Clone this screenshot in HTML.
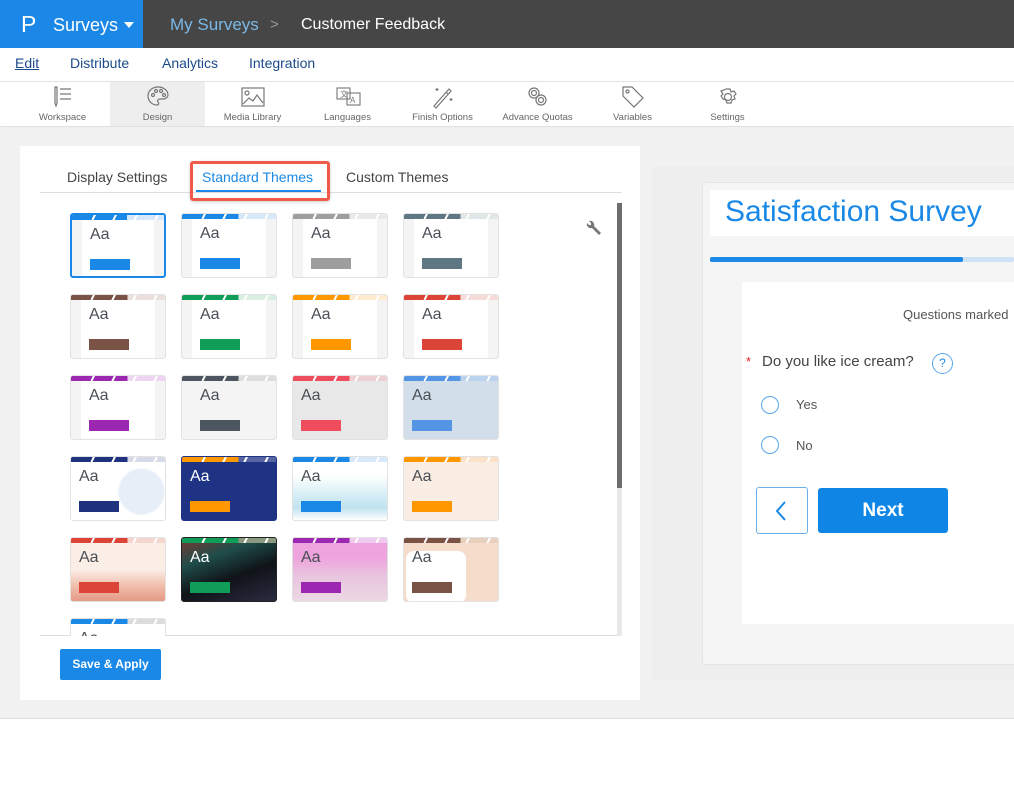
<!DOCTYPE html>
<html><head><meta charset="utf-8"><style>
*{box-sizing:border-box;margin:0;padding:0}
body{width:1014px;height:796px;overflow:hidden;background:#fff;font-family:"Liberation Sans",sans-serif;position:relative}
.abs{position:absolute}
.top{left:0;top:0;width:1014px;height:48px;background:#464646}
.brand{left:0;top:0;width:143px;height:48px;background:#1b87e6}
.nav a{position:absolute;top:55px;font-size:14px;color:#1a4a8a;text-decoration:none}
.tb{left:0;top:81px;width:1014px;height:45px;background:#fff;border-top:1px solid #e3e3e3;box-shadow:0 2px 3px rgba(0,0,0,.15)}
.ti{position:absolute;top:0;width:95px;height:44px;text-align:center}
.ti span{position:absolute;left:0;right:0;top:30px;font-size:9.5px;color:#666}
.ti svg{position:absolute;left:36px;top:3px}
.card{position:absolute;width:96px;height:65px;border:1px solid #e2e2e2;border-radius:3px;overflow:hidden;background:#f4f4f4}
.card .st{position:absolute;left:0;top:0;width:100%;height:5px}
.card .st:after{content:"";position:absolute;inset:0;background:repeating-linear-gradient(115deg,transparent 0 17px,#fff 17px 19px);background-position:3px 0}
.card .in{position:absolute;left:10px;right:10px;top:5px;bottom:0;background:#fff}
.card .aa{position:absolute;left:18px;top:11px;font-size:16px;color:#4a4f55}
.card .bt{position:absolute;left:18px;top:44px;width:40px;height:11px}
</style></head><body>
<div class="abs top"></div>
<div class="abs brand"></div>
<div class="abs" style="left:21px;top:11px;color:#fff;font-size:23px">P</div>
<div class="abs" style="left:53px;top:15px;color:#fff;font-size:18px">Surveys</div>
<div class="abs" style="left:124px;top:22px;width:0;height:0;border-left:5px solid transparent;border-right:5px solid transparent;border-top:6px solid #fff"></div>
<div class="abs" style="left:170px;top:15px;color:#7ab8e6;font-size:17px">My Surveys</div>
<div class="abs" style="left:270px;top:16px;color:#999;font-size:15px">&gt;</div>
<div class="abs" style="left:301px;top:16px;color:#fff;font-size:16px">Customer Feedback</div>
<div class="nav">
<a style="left:15px;text-decoration:underline">Edit</a><a style="left:70px">Distribute</a><a style="left:162px">Analytics</a><a style="left:249px">Integration</a>
</div>
<div class="abs tb">
<div class="ti" style="left:15px"><svg width="24" height="24" viewBox="0 0 24 24" fill="none" stroke="#777" stroke-width="1.2"><path d="M4 2v16l1 3 1-3V2z M9 4h11 M9 9h11 M9 14h11"/></svg><span>Workspace</span></div>
<div class="ti" style="left:110px;background:#eee"><svg width="24" height="24" viewBox="0 0 24 24" fill="none" stroke="#777" stroke-width="1.2"><path d="M12 2C6 2 2 6 2 11s4 9 9 9c2 0 2-2 1-3s0-3 2-3h3c3 0 5-2 5-4 0-5-5-8-10-8z"/><circle cx="7" cy="10" r="1.5"/><circle cx="10" cy="6" r="1.5"/><circle cx="15" cy="6" r="1.5"/><circle cx="18" cy="10" r="1.5"/></svg><span>Design</span></div>
<div class="ti" style="left:205px"><svg width="24" height="24" viewBox="0 0 24 24" fill="none" stroke="#777" stroke-width="1.2"><rect x="1" y="3" width="22" height="18"/><circle cx="6" cy="8" r="2"/><path d="M2 19l6-6 4 3 4-6 6 8"/></svg><span>Media Library</span></div>
<div class="ti" style="left:300px"><svg width="26" height="24" viewBox="0 0 26 24" fill="none" stroke="#777" stroke-width="1.1"><rect x="1" y="3" width="13" height="11"/><rect x="11" y="8" width="13" height="12"/><text x="4" y="12" font-size="8" fill="#777" stroke="none">文</text><text x="14" y="18" font-size="8" fill="#777" stroke="none">A</text></svg><span>Languages</span></div>
<div class="ti" style="left:395px"><svg width="24" height="24" viewBox="0 0 24 24" fill="none" stroke="#777" stroke-width="1.2"><path d="M3 21L18 4l2 2L5 23z M15 7l2 2 M6 3v3 M4.5 4.5h3 M20 13v3 M18.5 14.5h3"/></svg><span>Finish Options</span></div>
<div class="ti" style="left:490px"><svg width="24" height="24" viewBox="0 0 24 24" fill="none" stroke="#777" stroke-width="1.2"><circle cx="8" cy="8" r="5"/><circle cx="15" cy="15" r="5"/><circle cx="8" cy="8" r="2.5"/><circle cx="15" cy="15" r="2.5"/></svg><span>Advance Quotas</span></div>
<div class="ti" style="left:585px"><svg width="24" height="24" viewBox="0 0 24 24" fill="none" stroke="#777" stroke-width="1.2"><path d="M2 2h9l11 11-9 9L2 11z"/><circle cx="6.5" cy="6.5" r="1.5"/></svg><span>Variables</span></div>
<div class="ti" style="left:680px"><svg width="24" height="24" viewBox="0 0 24 24" fill="none" stroke="#777" stroke-width="1.2"><path d="M10 2h4l1 3 3-1 2 3-2 2 1 3-3 1-1 3h-4l-1-3-3-1-2-3 2-2-2-3 3-1z" transform="translate(0,2)"/><circle cx="12" cy="12" r="3.5"/></svg><span>Settings</span></div>
</div>
<div class="abs" style="left:0;top:127px;width:1014px;height:592px;background:#f1f1f1;border-bottom:1px solid #ddd"></div>
<div class="abs" style="left:20px;top:146px;width:620px;height:554px;background:#fff"></div>
<div class="abs" style="left:40px;top:192px;width:582px;height:1px;background:#ddd"></div>
<div class="abs" style="left:67px;top:169px;font-size:14px;color:#444">Display Settings</div>
<div class="abs" style="left:190px;top:161px;width:140px;height:40px;border:3px solid #f05a4a;border-radius:3px;box-shadow:0 1px 3px rgba(0,0,0,.2)"></div>
<div class="abs" style="left:202px;top:169px;font-size:14px;color:#1a88e6">Standard Themes</div>
<div class="abs" style="left:196px;top:190px;width:125px;height:2px;background:#1a88e6"></div>
<div class="abs" style="left:346px;top:169px;font-size:14px;color:#444">Custom Themes</div>
<svg class="abs" style="left:584px;top:220px" width="18" height="18" viewBox="0 0 18 18"><path d="M3 3a4 4 0 0 0 5 5l7 7 2-2-7-7a4 4 0 0 0-5-5l2 2v2H5z" fill="#777"/></svg>
<div class="abs" style="left:617px;top:203px;width:5px;height:433px;background:#e8e8e8"></div>
<div class="abs" style="left:617px;top:203px;width:5px;height:285px;background:#6d6d6d"></div>
<div class="abs" style="left:40px;top:203px;width:577px;height:433px;overflow:hidden;border-bottom:1px solid #ddd"></div>
<div class="abs" style="left:60px;top:649px;width:101px;height:31px;background:#1a88e6;border-radius:2px;color:#fff;font-size:12px;font-weight:bold;text-align:center;line-height:31px">Save &amp; Apply</div>

<div class="abs" style="left:652px;top:166px;width:362px;height:514px;background:#eee"></div>
<div class="abs" style="left:702px;top:182px;width:320px;height:483px;background:#f5f5f5;border:1px solid #e4e4e4;border-radius:4px"></div>
<div class="abs" style="left:710px;top:190px;width:304px;height:46px;background:#fff"></div>
<div class="abs" style="left:725px;top:195px;font-size:30px;color:#1a88e6">Satisfaction Survey</div>
<div class="abs" style="left:710px;top:257px;width:304px;height:5px;background:#cfe1f5;border-radius:2px"></div>
<div class="abs" style="left:710px;top:257px;width:253px;height:5px;background:#1a88e6;border-radius:2px"></div>
<div class="abs" style="left:742px;top:282px;width:272px;height:342px;background:#fff"></div>
<div class="abs" style="left:903px;top:307px;font-size:13px;color:#555;white-space:nowrap">Questions marked</div>
<div class="abs" style="left:746px;top:354px;font-size:13px;color:#e0202a">*</div>
<div class="abs" style="left:762px;top:353px;font-size:15px;color:#444">Do you like ice cream?</div>
<div class="abs" style="left:932px;top:353px;width:21px;height:21px;border:1.5px solid #5aa6ea;border-radius:50%;color:#1a88e6;font-size:12px;text-align:center;line-height:18px">?</div>
<div class="abs" style="left:761px;top:396px;width:18px;height:18px;border:1.5px solid #5aa6ea;border-radius:50%"></div>
<div class="abs" style="left:796px;top:397px;font-size:13px;color:#555">Yes</div>
<div class="abs" style="left:761px;top:436px;width:18px;height:18px;border:1.5px solid #5aa6ea;border-radius:50%"></div>
<div class="abs" style="left:796px;top:438px;font-size:13px;color:#555">No</div>
<div class="abs" style="left:756px;top:487px;width:52px;height:47px;border:1.5px solid #6aaeea;border-radius:3px"></div>
<svg class="abs" style="left:774px;top:500px" width="14" height="22" viewBox="0 0 14 22"><path d="M11 2L3 11l8 9" fill="none" stroke="#1a88e6" stroke-width="2"/></svg>
<div class="abs" style="left:818px;top:488px;width:130px;height:45px;background:#0f86e6;border-radius:3px;color:#fff;font-size:19px;font-weight:bold;text-align:center;line-height:45px">Next</div>

<div class="card" style="left:70px;top:213px;border:2px solid #1a88e6"><div class="st" style="background:linear-gradient(90deg,#1a88e6 60%,#d6e8fa 60%)"></div><div class="in"></div><div class="aa">Aa</div><div class="bt" style="background:#1a88e6"></div></div>
<div class="card" style="left:181px;top:213px"><div class="st" style="background:linear-gradient(90deg,#1a88e6 60%,#d6e8fa 60%)"></div><div class="in"></div><div class="aa">Aa</div><div class="bt" style="background:#1a88e6"></div></div>
<div class="card" style="left:292px;top:213px"><div class="st" style="background:linear-gradient(90deg,#9e9e9e 60%,#e9e9e9 60%)"></div><div class="in"></div><div class="aa">Aa</div><div class="bt" style="background:#9e9e9e"></div></div>
<div class="card" style="left:403px;top:213px"><div class="st" style="background:linear-gradient(90deg,#5f7782 60%,#e1e6e9 60%)"></div><div class="in"></div><div class="aa">Aa</div><div class="bt" style="background:#5f7782"></div></div>

<div class="card" style="left:70px;top:294px"><div class="st" style="background:linear-gradient(90deg,#7a5246 60%,#ebe0dd 60%)"></div><div class="in"></div><div class="aa">Aa</div><div class="bt" style="background:#7a5246"></div></div>
<div class="card" style="left:181px;top:294px"><div class="st" style="background:linear-gradient(90deg,#0f9d58 60%,#d8efe2 60%)"></div><div class="in"></div><div class="aa">Aa</div><div class="bt" style="background:#0f9d58"></div></div>
<div class="card" style="left:292px;top:294px"><div class="st" style="background:linear-gradient(90deg,#ff9800 60%,#ffebd0 60%)"></div><div class="in"></div><div class="aa">Aa</div><div class="bt" style="background:#ff9800"></div></div>
<div class="card" style="left:403px;top:294px"><div class="st" style="background:linear-gradient(90deg,#db4437 60%,#f6dcd9 60%)"></div><div class="in"></div><div class="aa">Aa</div><div class="bt" style="background:#db4437"></div></div>

<div class="card" style="left:70px;top:375px"><div class="st" style="background:linear-gradient(90deg,#9c27b0 60%,#eed6f2 60%)"></div><div class="in"></div><div class="aa">Aa</div><div class="bt" style="background:#9c27b0"></div></div>
<div class="card" style="left:181px;top:375px"><div class="st" style="background:linear-gradient(90deg,#4c5560 60%,#dcdee0 60%)"></div><div class="aa">Aa</div><div class="bt" style="background:#4c5560"></div></div>
<div class="card" style="left:292px;top:375px;background:#e8e8e8"><div class="st" style="background:linear-gradient(90deg,#ef4c5e 60%,#ecd0d3 60%)"></div><div class="aa" style="left:8px">Aa</div><div class="bt" style="left:8px;background:#ef4c5e"></div></div>
<div class="card" style="left:403px;top:375px;background:#d2dfeb"><div class="st" style="background:linear-gradient(90deg,#5595e6 60%,#bcd3ee 60%)"></div><div class="aa" style="left:8px">Aa</div><div class="bt" style="left:8px;background:#5595e6"></div></div>

<div class="card" style="left:70px;top:456px;background:radial-gradient(circle at 75% 55%,#e6eef8 0 22px,#fff 24px)"><div class="st" style="background:linear-gradient(90deg,#1e3280 60%,#d7dbe9 60%)"></div><div class="aa" style="left:8px">Aa</div><div class="bt" style="left:8px;background:#1e3280"></div></div>
<div class="card" style="left:181px;top:456px;background:#1f3384;border-color:#1f3384"><div class="st" style="background:linear-gradient(90deg,#ff9800 60%,#5766a3 60%)"></div><div class="aa" style="left:8px;color:#fff">Aa</div><div class="bt" style="left:8px;background:#ff9800"></div></div>
<div class="card" style="left:292px;top:456px;background:linear-gradient(180deg,#fff 30%,#d6eef6 60%,#bfe2ef 80%,#fff)"><div class="st" style="background:linear-gradient(90deg,#1a88e6 60%,#d6e8fa 60%)"></div><div class="aa" style="left:8px">Aa</div><div class="bt" style="left:8px;background:#1a88e6"></div></div>
<div class="card" style="left:403px;top:456px;background:#faeee4"><div class="st" style="background:linear-gradient(90deg,#ff9800 60%,#fbe1c8 60%)"></div><div class="aa" style="left:8px">Aa</div><div class="bt" style="left:8px;background:#ff9800"></div></div>

<div class="card" style="left:70px;top:537px;background:linear-gradient(180deg,#fbeee6 50%,#f0c0ad 75%,#e59a85)"><div class="st" style="background:linear-gradient(90deg,#db4437 60%,#f5d6cf 60%)"></div><div class="aa" style="left:8px">Aa</div><div class="bt" style="left:8px;background:#db4437"></div></div>
<div class="card" style="left:181px;top:537px;background:linear-gradient(160deg,#7a3a30,#1f4d4a 30%,#101318 60%,#2a2b40);border-color:#222"><div class="st" style="background:linear-gradient(90deg,#0f9d58 60%,#8a9a80 60%)"></div><div class="aa" style="left:8px;color:#fff">Aa</div><div class="bt" style="left:8px;background:#0f9d58"></div></div>
<div class="card" style="left:292px;top:537px;background:linear-gradient(180deg,#eea2de 30%,#e9c4df 60%,#ecd8e4)"><div class="st" style="background:linear-gradient(90deg,#9c27b0 60%,#efc9ef 60%)"></div><div class="aa" style="left:8px">Aa</div><div class="bt" style="left:8px;background:#9c27b0"></div></div>
<div class="card" style="left:403px;top:537px;background:#f6dccb"><div class="st" style="background:linear-gradient(90deg,#7a5246 60%,#e8d0be 60%)"></div><div style="position:absolute;left:2px;top:13px;width:60px;height:52px;background:#fff;border-radius:8px"></div><div class="aa" style="left:8px">Aa</div><div class="bt" style="left:8px;background:#7a5246"></div></div>

<div class="abs" style="left:70px;top:618px;width:96px;height:18px;overflow:hidden"><div class="card" style="left:0;top:0;background:#fff"><div class="st" style="background:linear-gradient(90deg,#1a88e6 60%,#dcdcdc 60%)"></div><div class="aa" style="left:8px">Aa</div></div></div>
</body></html>
